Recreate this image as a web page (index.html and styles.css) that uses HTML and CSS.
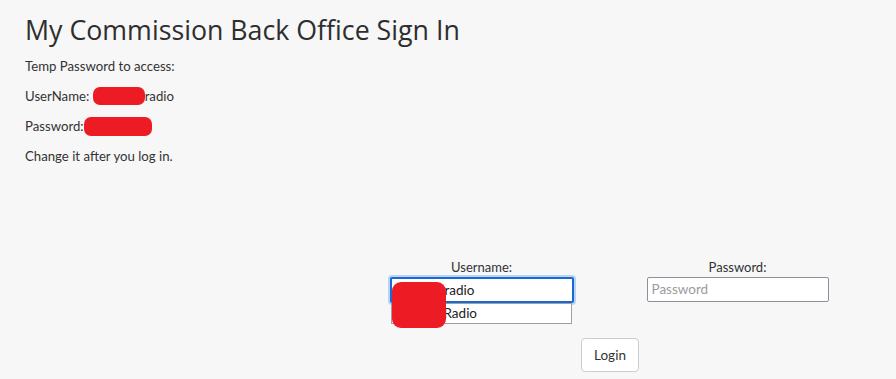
FILE: index.html
```html
<!DOCTYPE html>
<html>
<head>
<meta charset="utf-8">
<link rel="stylesheet" href="styles.css">
</head>
<body>
<div class="page">
  <h1 class="title">My Commission Back Office Sign In</h1>
  <p class="line">Temp Password to access:</p>
  <p class="line">UserName: <span class="redact redact-user"></span>radio</p>
  <p class="line">Password:<span class="redact redact-pass"></span></p>
  <p class="line">Change it after you log in.</p>

  <form class="login">
    <div class="fields">
      <div class="field">
        <label class="label">Username:</label>
        <div class="input-wrap">
          <div class="input focused"><span class="value">radio</span></div>
          <div class="suggest">Radio</div>
          <span class="redact redact-input"></span>
        </div>
      </div>
      <div class="field">
        <label class="label">Password:</label>
        <div class="input-wrap">
          <div class="input"><span class="placeholder">Password</span></div>
        </div>
      </div>
    </div>
    <div class="actions">
      <button type="button" class="btn">Login</button>
    </div>
  </form>
</div>
</body>
</html>
```
FILE: styles.css
```css
html, body {
  margin: 0;
  padding: 0;
  background: #f7f7f7;
}
body {
  font-family: Lato, "Open Sans", "Liberation Sans", sans-serif;
  color: #333333;
  font-size: 14px;
}
.page {
  padding: 14px 0 0 25px;
}
.title {
  font-family: "Open Sans", Lato, sans-serif;
  font-weight: 400;
  font-size: 26.75px;
  line-height: 32px;
  margin: 0 0 11px 0;
  color: #2e2e2e;
}
.line {
  margin: 0 0 11px 0;
  line-height: 19px;
  font-size: 13.2px;
}
.redact {
  display: inline-block;
  background: #ed1c24;
  border-radius: 7px;
  vertical-align: middle;
}
.redact-user {
  width: 52px;
  height: 18px;
  margin: -4px 0 0 0;
}
.redact-pass {
  width: 68px;
  height: 19px;
  margin: -3px 0 0 0;
}
.login {
  margin: 93px 0 0 329px;
  width: 512px;
}
.fields {
  display: grid;
  grid-template-columns: 255px 257px;
}
.field {
  display: flex;
  flex-direction: column;
  align-items: center;
}
.label {
  font-size: 13px;
  line-height: 16px;
  margin-bottom: 2px;
}
.input-wrap {
  position: relative;
}
.input {
  box-sizing: border-box;
  width: 182px;
  height: 25px;
  background: #fff;
  border: 1px solid #8f8f9d;
  border-radius: 2px;
  font-size: 13.5px;
  line-height: 23px;
  padding-left: 4px;
}
.input.focused {
  width: 184px;
  height: 26px;
  border: 2px solid #1a68d6;
  box-shadow: 0 0 0 2px #b9d3f5;
  padding-left: 53px;
  line-height: 22px;
  color: #222;
}
.placeholder {
  color: #9b9b9b;
}
.suggest {
  position: absolute;
  left: 1px;
  top: 26px;
  box-sizing: border-box;
  width: 181px;
  height: 21px;
  background: #fff;
  border: 1px solid #a0a0a0;
  font-size: 13.5px;
  line-height: 19px;
  padding-left: 52px;
  color: #222;
}
.redact-input {
  position: absolute;
  left: 2px;
  top: 5px;
  width: 54px;
  height: 46px;
  border-radius: 9px;
}
.actions {
  display: flex;
  justify-content: center;
  margin-top: 35px;
}
.btn {
  font-family: inherit;
  font-size: 13.5px;
  color: #333;
  background: #fff;
  border: 1px solid #cccccc;
  border-radius: 4px;
  width: 58px;
  height: 34px;
  padding: 0;
}
```
